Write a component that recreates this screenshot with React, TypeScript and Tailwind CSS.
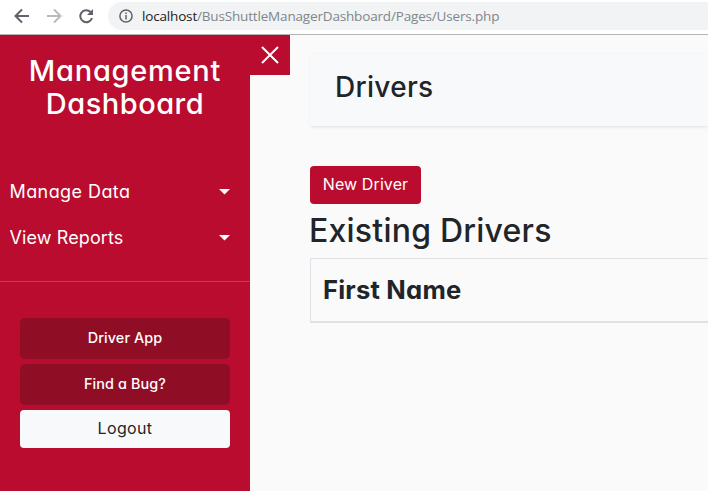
import type { ReactNode } from 'react';

function BrowserBar() {
  return (
    <header className="flex h-[35px] shrink-0 items-start border-b border-[#b5b5b5] bg-white">
      <nav className="flex h-8 w-[108px] shrink-0 items-center gap-4 pl-[14px] text-[#5f6368]">
        <svg width="16" height="16" viewBox="0 0 16 16" fill="none" stroke="currentColor" strokeWidth="2"><path d="M15 8H2M8 1.5L1.5 8L8 14.5" /></svg>
        <svg width="16" height="16" viewBox="0 0 16 16" fill="none" stroke="#bababa" strokeWidth="2"><path d="M1 8H14M8 1.5L14.5 8L8 14.5" /></svg>
        <svg width="16" height="16" viewBox="0 0 16 16" fill="none"><path d="M14 10A6 6 0 1 1 12.6 4" stroke="currentColor" strokeWidth="2" /><path d="M15 1V7H9Z" fill="currentColor" /></svg>
      </nav>
      <div className="mt-[2px] flex h-7 flex-1 items-center rounded-l-full bg-[#f1f3f4] pl-[11px]">
        <svg width="14" height="14" viewBox="0 0 14 14" fill="none" stroke="#5f6368" strokeWidth="1.5"><circle cx="7" cy="7" r="6.1" /><path d="M7 6V10.5M7 3.4V5" /></svg>
        <span className="ml-[9px] whitespace-nowrap font-['Open_Sans','Noto_Sans',sans-serif] text-[13.5px] tracking-[-0.17px] text-[#80868b]"><span className="text-[#202124]">localhost</span>/BusShuttleManagerDashboard/Pages/Users.php</span>
      </div>
    </header>
  );
}

function MenuRow({ children }: { children: ReactNode }) {
  return (
    <a className="flex h-[46px] items-center justify-between pl-[9.5px] pr-5 text-[18px] leading-[26px]">
      {children}
      <svg width="11" height="6" viewBox="0 0 11 6" fill="currentColor"><path d="M0 0H11L5.5 5.5Z" /></svg>
    </a>
  );
}

function Sidebar() {
  return (
    <aside className="w-[250px] shrink-0 bg-[#b90c2e] text-white">
      <h3 className="pb-px pt-[19px] text-center text-[29px] font-medium leading-[33px]">
        <span className="block tracking-[0.75px]">Management</span>
        <span className="block tracking-[0.5px]">Dashboard</span>
      </h3>
      <div className="mt-12 border-b border-[#71617e] pb-5">
        <MenuRow><span className="tracking-[0.42px]">Manage Data</span></MenuRow>
        <MenuRow><span className="tracking-[0.1px]">View Reports</span></MenuRow>
      </div>
      <div className="flex flex-col gap-[5px] px-5 pt-9">
        <button className="h-[41px] rounded-[5px] bg-[#8f0e26] pb-[2px] text-[14.4px] font-medium tracking-[0.1px]">Driver App</button>
        <button className="h-[41px] rounded-[5px] bg-[#8f0e26] pb-[2px] text-[14.4px] font-medium tracking-[0.1px]">Find a Bug?</button>
        <button className="h-[38px] rounded-[4px] bg-[#f8f9fa] pb-[2px] text-[16px] tracking-[0.35px] text-[#212529]">Logout</button>
      </div>
    </aside>
  );
}

export default function App() {
  return (
    <div className="flex h-[491px] w-[708px] flex-col overflow-hidden bg-[#fafafa] font-[Inter,sans-serif] text-[#212529] [font-feature-settings:'cv11']">
      <BrowserBar />
      <div className="flex min-h-0 flex-1">
        <Sidebar />
        <button className="flex size-10 shrink-0 items-center justify-center bg-[#b90c2e]">
          <svg width="18" height="18" viewBox="0 0 18 18" fill="none" stroke="white" strokeWidth="2"><path d="M1 1L17 17M17 1L1 17" /></svg>
        </button>
        <main className="min-w-0 flex-1 pl-5 pt-[19px]">
          <div className="h-[72px] bg-[#f8f9fb] pl-[25px] pt-4 shadow-[1px_1px_3px_rgba(0,0,0,0.1)]">
            <h3 className="text-[28px] font-[450] leading-[34px] tracking-[0.3px]">Drivers</h3>
          </div>
          <button className="mt-10 block h-[38px] w-[111px] whitespace-nowrap rounded-[4px] bg-[#b90c2e] pb-[2px] text-[16px] tracking-[0.1px] text-white">New Driver</button>
          <h2 className="-ml-px mt-2 text-[32px] font-[450] leading-[38px] tracking-[0.22px]">Existing Drivers</h2>
          <div className="mt-2 flex h-[65px] items-center border-b-2 border-l border-t border-[#dee2e6] pl-3">
            <span className="text-[25.6px] font-bold tracking-[0.2px]">First Name</span>
          </div>
        </main>
      </div>
    </div>
  );
}
